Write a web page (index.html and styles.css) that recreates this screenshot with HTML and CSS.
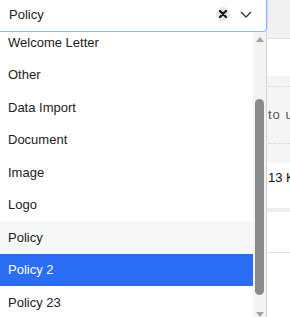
FILE: index.html
```html
<!DOCTYPE html>
<html lang="en">
<head>
    <meta charset="UTF-8">
    <title>Document type</title>
    <link rel="stylesheet" href="styles.css">
</head>
<body>
    <div class="grid">
        <div class="grid-head"></div>
        <div class="grid-row row-plain"></div>
        <div class="grid-row row-shaded">
            <div class="cell-text muted">to u</div>
        </div>
        <div class="grid-row row-size">
            <div class="cell-text">13 K</div>
        </div>
        <div class="grid-band"></div>
        <div class="grid-row row-last"></div>
    </div>

    <!-- Type picker, open -->
    <div class="picker">
        <div class="picker-control">
            <span class="picker-value">Policy</span>
            <span class="picker-clear">
                <svg width="8" height="8" viewBox="0 0 8 8"><path d="M1 1L7 7M7 1L1 7" stroke="#111" stroke-width="2.2" stroke-linecap="round"/></svg>
            </span>
            <span class="picker-arrow">
                <svg width="12" height="7" viewBox="0 0 12 7"><path d="M1 1L6 6L11 1" fill="none" stroke="#333" stroke-width="1.3"/></svg>
            </span>
        </div>
        <div class="picker-menu">
            <ul class="option-list">
                <li class="option">Welcome Letter</li>
                <li class="option">Other</li>
                <li class="option">Data Import</li>
                <li class="option">Document</li>
                <li class="option">Image</li>
                <li class="option">Logo</li>
                <li class="option hover">Policy</li>
                <li class="option selected">Policy 2</li>
                <li class="option">Policy 23</li>
            </ul>
            <div class="scrollbar">
                <span class="arrow-up"></span>
                <div class="thumb-track">
                    <div class="thumb"></div>
                </div>
                <span class="arrow-down"></span>
            </div>
        </div>
    </div>
</body>
</html>
```

FILE: styles.css
```css
body {
    margin: 0;
    width: 290px;
    height: 317px;
    overflow: hidden;
    position: relative;
    background: #fff;
    font-family: "Liberation Sans", Arial, sans-serif;
}
.grid {
    display: flex;
    flex-direction: column;
}
.grid-head {
    height: 38px;
    background: #f1f1f1;
    border-bottom: 1px solid #e1e1e1;
}
.grid-row {
    display: flex;
    align-items: center;
    padding-left: 268px;
    white-space: nowrap;
    overflow: hidden;
}
.row-plain {
    height: 37px;
}
.row-shaded {
    height: 87px;
    background: #f5f5f5;
    position: relative;
    padding-bottom: 10px;
    box-sizing: border-box;
}
.row-shaded::before,
.row-shaded::after {
    content: "";
    position: absolute;
    left: 268px;
    right: 0;
    border-top: 1px dashed #dcdcdc;
}
.row-shaded::before {
    top: 10px;
}
.row-shaded::after {
    top: 67px;
}
.row-size {
    height: 45px;
    align-items: flex-start;
    padding-top: 7px;
    box-sizing: border-box;
}
.grid-band {
    height: 4px;
    background: #eeeeee;
}
.row-last {
    height: 40px;
    border-bottom: 1px solid #e3e3e3;
}
.cell-text {
    font-size: 13px;
    color: #111;
}
.cell-text.muted {
    color: #555;
    letter-spacing: 1px;
}

.picker {
    position: absolute;
    left: -4px;
    top: -6px;
    width: 271px;
}
.picker-control {
    height: 38px;
    box-sizing: border-box;
    display: flex;
    align-items: center;
    padding: 0 14px 0 12px;
    background: #fff;
    border: 1px solid #8fb6f5;
    border-radius: 4px;
    box-shadow: 0 0 0 1px #c9dcfb;
    font-size: 13px;
    color: #222;
}
.picker-value {
    flex: 1;
    padding-top: 3px;
}
.picker-clear {
    width: 14px;
    height: 14px;
    border-radius: 50%;
    background: #e6e6e6;
    display: flex;
    align-items: center;
    justify-content: center;
    margin-right: 10px;
    margin-top: 2px;
}
.picker-arrow {
    display: flex;
    margin-top: 2px;
}
.picker-menu {
    margin-left: 4px;
    display: flex;
    height: 290px;
    background: #fff;
    border-right: 1px solid #d4d4d4;
    overflow: hidden;
}
.option-list {
    flex: 1;
    list-style: none;
    margin: -6px 0 0;
    padding: 0;
}
.option {
    height: 32.5px;
    display: flex;
    align-items: center;
    padding-left: 8px;
    font-size: 13px;
    color: #222;
}
.option.hover {
    background: #f6f7f9;
}
.option.selected {
    background: #2a6cf2;
    color: #fff;
}
.scrollbar {
    width: 13px;
    background: #f3f3f3;
    display: flex;
    flex-direction: column;
    align-items: center;
}
.arrow-up,
.arrow-down {
    width: 0;
    height: 0;
    border-left: 4px solid transparent;
    border-right: 4px solid transparent;
    margin: 5px 0;
}
.arrow-up {
    border-bottom: 5px solid #a3a3a3;
}
.arrow-down {
    border-top: 5px solid #a3a3a3;
}
.thumb-track {
    flex: 1;
    width: 100%;
    display: flex;
    justify-content: center;
}
.thumb {
    width: 9px;
    margin-top: 52px;
    height: 196px;
    border-radius: 5px;
    background: #8a8a8a;
}
```
